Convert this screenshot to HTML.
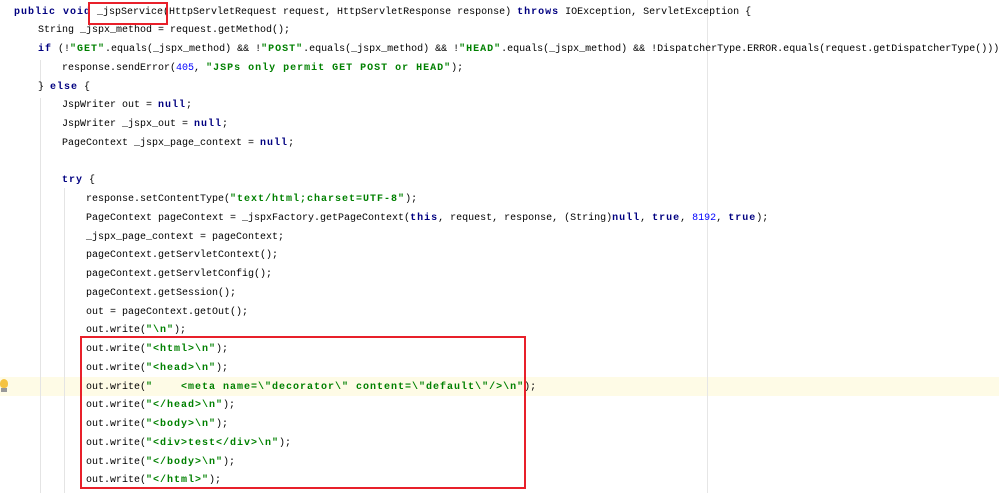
<!DOCTYPE html>
<html><head><meta charset="utf-8"><style>
body{margin:0;width:999px;height:493px;background:#fff;overflow:hidden;position:relative;font-family:"Liberation Mono","Noto Sans CJK SC",monospace;font-size:10px;color:#000}
.l{position:absolute;height:18.75px;line-height:18.75px;white-space:pre}
.k{color:#000080;font-weight:bold;letter-spacing:1px}
.s{color:#008000;font-weight:bold;letter-spacing:1px}
.n{color:#0000ff}
.g{position:absolute;width:1px;background:#e4e4e4}
.box{position:absolute;border:2px solid #e8202a;box-sizing:border-box}
</style></head><body>
<div style="position:absolute;left:0;top:377px;width:999px;height:19px;background:#fefbe6"></div>
<div style="position:absolute;left:707px;top:0;width:1px;height:493px;background:#e6e6e6"></div>
<div class="g" style="left:40px;top:60px;height:28px"></div>
<div class="g" style="left:40px;top:98px;height:395px"></div>
<div class="g" style="left:64px;top:188px;height:305px"></div>
<div style="position:absolute;left:0;top:379px;width:8px;height:9px;border-radius:50% 50% 40% 40%;background:#f5c342"></div>
<div style="position:absolute;left:1px;top:388px;width:6px;height:4px;background:#999"></div>

<div class="l" style="left:14px;top:3.6px"><span class="k">public void</span> _jspService(HttpServletRequest request, HttpServletResponse response) <span class="k">throws</span> IOException, ServletException {</div>
<div class="l" style="left:38px;top:22.4px">String _jspx_method = request.getMethod();</div>
<div class="l" style="left:38px;top:41.1px"><span class="k">if</span> (!<span class="s">"GET"</span>.equals(_jspx_method) &amp;&amp; !<span class="s">"POST"</span>.equals(_jspx_method) &amp;&amp; !<span class="s">"HEAD"</span>.equals(_jspx_method) &amp;&amp; !DispatcherType.ERROR.equals(request.getDispatcherType()))</div>
<div class="l" style="left:62px;top:59.9px">response.sendError(<span class="n">405</span>, <span class="s">"JSPs only permit GET POST or HEAD"</span>);</div>
<div class="l" style="left:38px;top:78.6px">} <span class="k">else</span> {</div>
<div class="l" style="left:62px;top:97.4px">JspWriter out = <span class="k">null</span>;</div>
<div class="l" style="left:62px;top:116.1px">JspWriter _jspx_out = <span class="k">null</span>;</div>
<div class="l" style="left:62px;top:134.9px">PageContext _jspx_page_context = <span class="k">null</span>;</div>
<div class="l" style="left:62px;top:172.4px"><span class="k">try</span> {</div>
<div class="l" style="left:86px;top:191.1px">response.setContentType(<span class="s">"text/html;charset=UTF-8"</span>);</div>
<div class="l" style="left:86px;top:209.9px">PageContext pageContext = _jspxFactory.getPageContext(<span class="k">this</span>, request, response, (String)<span class="k">null</span>, <span class="k">true</span>, <span class="n">8192</span>, <span class="k">true</span>);</div>
<div class="l" style="left:86px;top:228.6px">_jspx_page_context = pageContext;</div>
<div class="l" style="left:86px;top:247.4px">pageContext.getServletContext();</div>
<div class="l" style="left:86px;top:266.1px">pageContext.getServletConfig();</div>
<div class="l" style="left:86px;top:284.9px">pageContext.getSession();</div>
<div class="l" style="left:86px;top:303.6px">out = pageContext.getOut();</div>
<div class="l" style="left:86px;top:322.4px">out.write(<span class="s">"\n"</span>);</div>
<div class="l" style="left:86px;top:341.1px">out.write(<span class="s">"&lt;html&gt;\n"</span>);</div>
<div class="l" style="left:86px;top:359.9px">out.write(<span class="s">"&lt;head&gt;\n"</span>);</div>
<div class="l" style="left:86px;top:378.6px">out.write(<span class="s">"    &lt;meta name=\"decorator\" content=\"default\"/&gt;\n"</span>);</div>
<div class="l" style="left:86px;top:397.4px">out.write(<span class="s">"&lt;/head&gt;\n"</span>);</div>
<div class="l" style="left:86px;top:416.1px">out.write(<span class="s">"&lt;body&gt;\n"</span>);</div>
<div class="l" style="left:86px;top:434.9px">out.write(<span class="s">"&lt;div&gt;test&lt;/div&gt;\n"</span>);</div>
<div class="l" style="left:86px;top:453.6px">out.write(<span class="s">"&lt;/body&gt;\n"</span>);</div>
<div class="l" style="left:86px;top:472.4px">out.write(<span class="s">"&lt;/html&gt;"</span>);</div>

<div class="box" style="left:88px;top:2px;width:80px;height:23px"></div>
<div class="box" style="left:80px;top:336px;width:446px;height:153px"></div>
</body></html>
